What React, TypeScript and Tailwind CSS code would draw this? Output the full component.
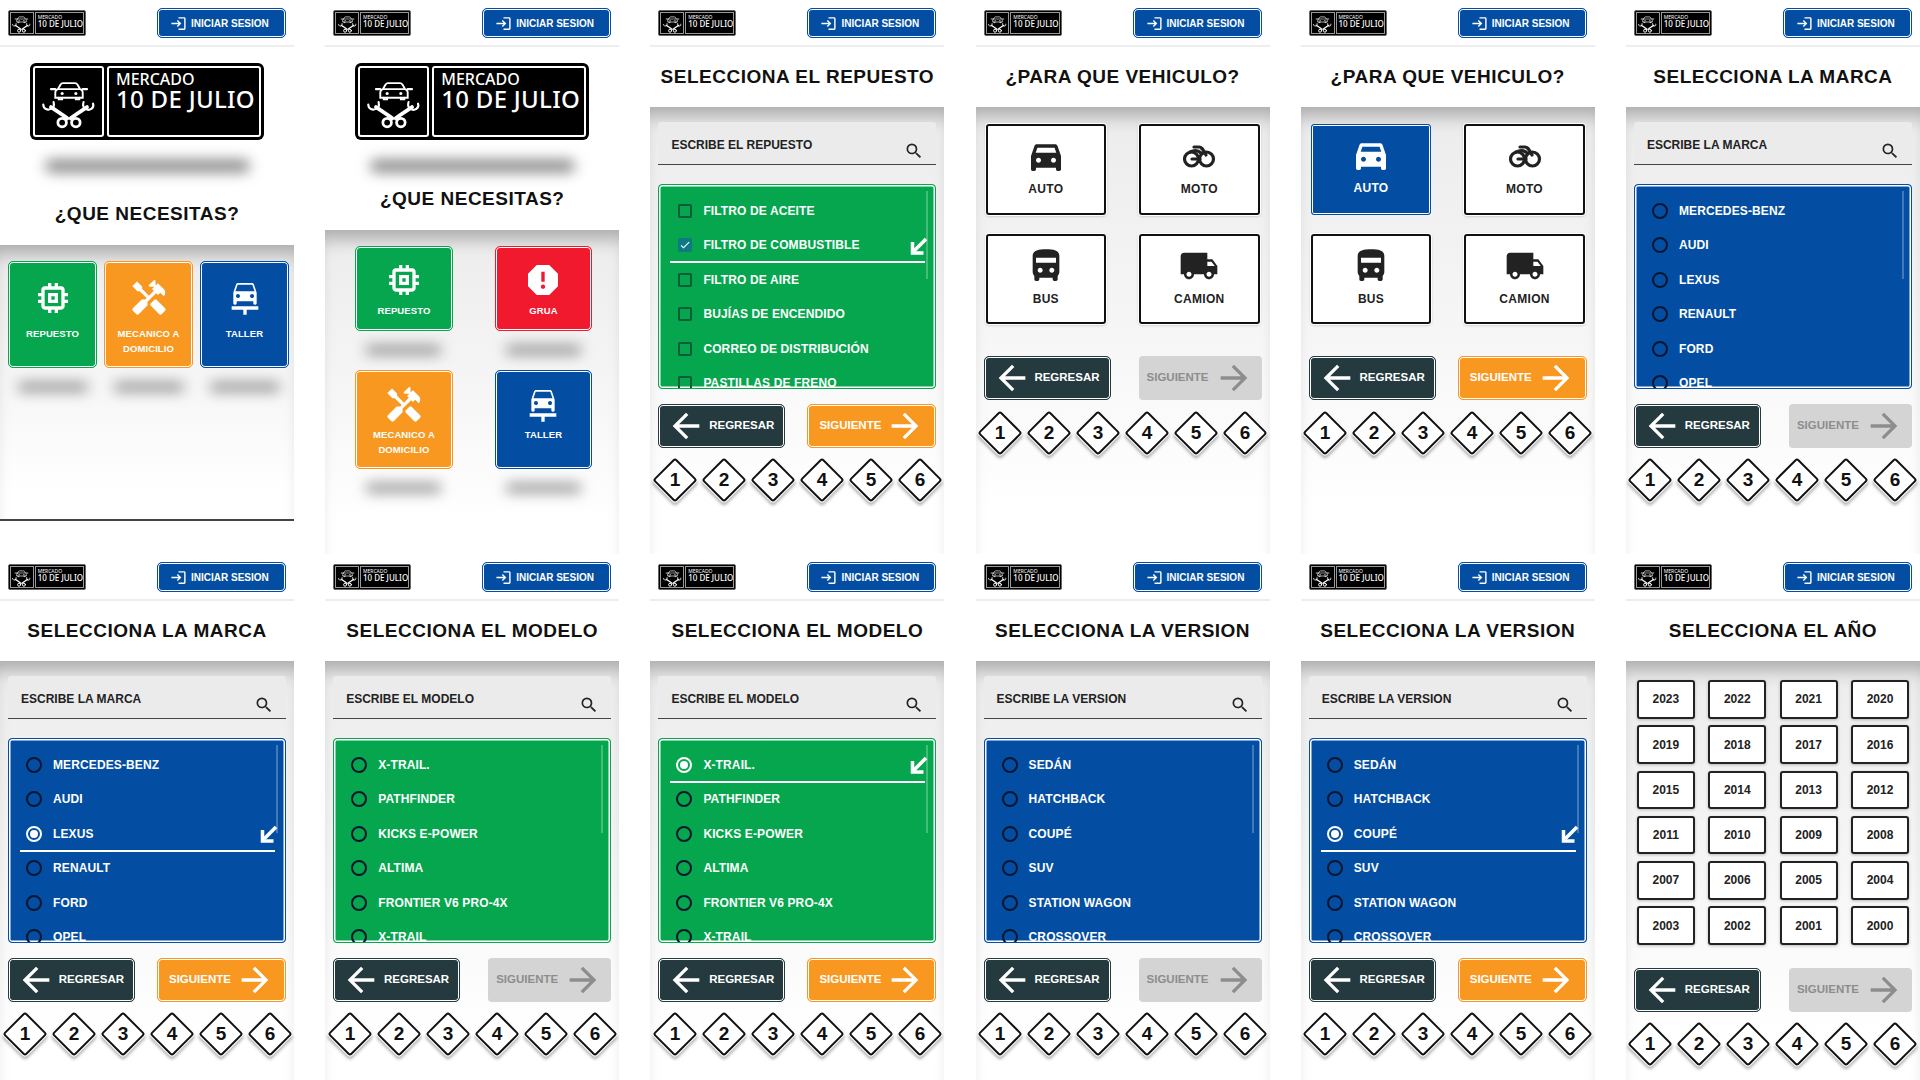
import {
  MdArrowBack,
  MdArrowForward,
  MdCarRepair,
  MdCheck,
  MdDirectionsBusFilled,
  MdDirectionsCarFilled,
  MdHandyman,
  MdLocalShipping,
  MdLogin,
  MdMemory,
  MdReport,
  MdSearch,
} from 'react-icons/md';

const marcas = ['MERCEDES-BENZ', 'AUDI', 'LEXUS', 'RENAULT', 'FORD', 'OPEL'];
const modelos = ['X-TRAIL.', 'PATHFINDER', 'KICKS E-POWER', 'ALTIMA', 'FRONTIER V6 PRO-4X', 'X-TRAIL'];
const versiones = ['SEDÁN', 'HATCHBACK', 'COUPÉ', 'SUV', 'STATION WAGON', 'CROSSOVER'];
const repuestos = [
  'FILTRO DE ACEITE',
  'FILTRO DE COMBUSTIBLE',
  'FILTRO DE AIRE',
  'BUJÍAS DE ENCENDIDO',
  'CORREO DE DISTRIBUCIÓN',
  'PASTILLAS DE FRENO',
];
const years = Array.from({ length: 24 }, (_, i) => 2023 - i);

const LogoMark = ({ className }: { className: string }) => (
  <svg viewBox="0 0 70 70" className={className} fill="none" stroke="white" strokeLinecap="round">
    <path d="M22 20l3-5c.6-1.200 1.500-2 3-2h14c1.500 0 2.400.8 3 2l3 5c2 .8 3 2 3 4v6H19v-6c0-2 1-3.200 3-4z" strokeWidth="2.200" />
    <path d="M23 20h24" strokeWidth="1.800" />
    <path d="M23 30v2h4v-2M47 30v2h-4v-2" strokeWidth="2.200" />
    <path d="M14 20h5M51 20h5" strokeWidth="2.500" />
    <circle cx="27" cy="25" r="1.800" fill="white" stroke="none" />
    <circle cx="43" cy="25" r="1.800" fill="white" stroke="none" />
    <path d="M14 41l15 10 4 3M56 41L41 51l-4 3" strokeWidth="4.500" />
    <path d="M5 38c0 5 5 7 9 5 3-1 4-4 3-8M63 37c2 5-4 9-9 6-3-2-3-5-2-8" strokeWidth="2.500" />
    <circle cx="27" cy="59" r="5" strokeWidth="3.200" />
    <circle cx="43" cy="59" r="5" strokeWidth="3.200" />
  </svg>
);

const Logo = ({ small }: { small?: boolean }) =>
  small ? (
    <div className="flex h-[26px] w-[78px] gap-[1px] rounded-[2px] border border-[#666] bg-black p-[1px] font-['Noto_Sans',sans-serif]">
      <div className="flex w-[24px] items-center justify-center border border-[#999]">
        <LogoMark className="h-[21px] w-[21px]" />
      </div>
      <div className="flex-1 whitespace-nowrap border border-[#999] pl-[2px] pt-[1px] text-white">
        <div className="text-[5px] leading-[6px]">MERCADO</div>
        <div className="text-[8px] font-medium leading-[8px]">10 DE JULIO</div>
      </div>
    </div>
  ) : (
    <div className="mx-auto flex h-[77px] w-[234px] gap-[3px] rounded-[6px] bg-black p-[3px] font-['Noto_Sans',sans-serif]">
      <div className="flex w-[71px] items-center justify-center rounded-[3px] border-2 border-white">
        <LogoMark className="h-[60px] w-[60px]" />
      </div>
      <div className="flex-1 whitespace-nowrap rounded-[3px] border-2 border-white pl-[7px] pt-[3px] text-white">
        <div className="text-[16px] font-medium leading-[17px]">MERCADO</div>
        <div className="text-[24px] font-medium leading-[22px] tracking-[0.3px]">10 DE JULIO</div>
      </div>
    </div>
  );

const Header = () => (
  <div className="flex h-[47px] shrink-0 items-center justify-between border-b-2 border-[#eeeeee] pl-[8px] pr-[8px] pt-[1px]">
    <Logo small />
    <div className="flex h-[30px] w-[129px] items-center gap-[4px] rounded-[5px] border border-[#034ea2] bg-[#034ea2] pl-[12px] text-[10px] font-bold text-white shadow-[inset_0_0_0_1px_white]">
      <MdLogin size={17} />
      INICIAR SESION
    </div>
  </div>
);

const Title = ({ text }: { text: string }) => (
  <div className="flex h-[60px] shrink-0 items-center justify-center text-[19px] font-bold tracking-[0.5px] text-[#111]">
    {text}
  </div>
);

const BlurShadow = ({ className }: { className: string }) => (
  <div className={`rounded-full bg-[#808080] blur-[7px] ${className}`} />
);

const panelClass =
  'flex flex-col bg-gradient-to-b from-[#ececec] via-[#f6f6f6] via-50% to-white to-90% shadow-[inset_0_18px_18px_-9px_rgba(0,0,0,0.28)]';

type ServiceProps = {
  label: string[];
  icon: React.ComponentType<{ size?: number }>;
  color: string;
  className: string;
};

const ServiceCard = ({ label, icon: Icon, color, className }: ServiceProps) => (
  <div
    className={`flex flex-col items-center rounded-[5px] border text-[9.500px] font-bold leading-[14.500px] tracking-[0.1px] text-white shadow-[inset_0_0_0_1px_white] ${color} ${className}`}
  >
    <Icon size={40} />
    {label.map((l) => (
      <div key={l}>{l}</div>
    ))}
  </div>
);

const green = 'border-[#06a64e] bg-[#06a64e]';
const orange = 'border-[#f99820] bg-[#f99820]';
const blue = 'border-[#034ea2] bg-[#034ea2]';
const red = 'border-[#f1192d] bg-[#f1192d]';

const HomeThree = () => (
  <>
    <div className="mt-[16px]">
      <Logo />
    </div>
    <BlurShadow className="mx-auto mt-[20px] h-[12px] w-[205px]" />
    <div className="mt-[22px] flex h-[40px] items-center justify-center text-[19px] font-bold tracking-[0.5px] text-[#111]">
      ¿QUE NECESITAS?
    </div>
    <div className={`${panelClass} mt-[11px] h-[276px] border-b-2 border-[#444]`}>
      <div className="mt-[16px] grid grid-cols-3 gap-x-[7px] pl-[8px] pr-[5px]">
        {[
          { label: ['REPUESTO'], icon: MdMemory, color: green },
          { label: ['MECANICO A', 'DOMICILIO'], icon: MdHandyman, color: orange },
          { label: ['TALLER'], icon: MdCarRepair, color: blue },
        ].map((c) => (
          <div key={c.label[0]}>
            <ServiceCard {...c} className="h-[107px] pt-[16px] [&>svg]:mb-[9px]" />
            <BlurShadow className="mx-auto mt-[15px] h-[8px] w-[70px]" />
          </div>
        ))}
      </div>
    </div>
  </>
);

const HomeFour = () => (
  <>
    <div className="mt-[16px]">
      <Logo />
    </div>
    <BlurShadow className="mx-auto mt-[20px] h-[12px] w-[205px]" />
    <div className="mt-[7px] flex h-[40px] items-center justify-center text-[19px] font-bold tracking-[0.5px] text-[#111]">
      ¿QUE NECESITAS?
    </div>
    <div className={`${panelClass} mt-[11px] flex-1`}>
      <div className="mt-[16px] grid grid-cols-2 gap-x-[42px] pl-[30px] pr-[27px]">
        {[
          { label: ['REPUESTO'], icon: MdMemory, color: green, h: 'h-[85px] pt-[13px] [&>svg]:mb-[4px]' },
          { label: ['GRUA'], icon: MdReport, color: red, h: 'h-[85px] pt-[13px] [&>svg]:mb-[4px]' },
          { label: ['MECANICO A', 'DOMICILIO'], icon: MdHandyman, color: orange, h: 'h-[99px] pt-[14px] [&>svg]:mb-[3px]' },
          { label: ['TALLER'], icon: MdCarRepair, color: blue, h: 'h-[99px] pt-[14px] [&>svg]:mb-[3px]' },
        ].map((c) => (
          <div key={c.label[0]} className="h-[124px]">
            <ServiceCard label={c.label} icon={c.icon} color={c.color} className={c.h} />
            <BlurShadow className="mx-auto mt-[15px] h-[8px] w-[75px]" />
          </div>
        ))}
      </div>
    </div>
  </>
);

const Diamonds = () => (
  <div className="mt-[10px] flex h-[44px] w-full">
    {[1, 2, 3, 4, 5, 6].map((n) => (
      <div key={n} className="flex flex-1 items-center justify-center">
        <div className="flex h-[32px] w-[32px] rotate-45 items-center justify-center rounded-[3px] border-2 border-[#111] bg-white shadow-[0_0_0_1px_white,2px_2px_3px_1px_rgba(0,0,0,0.28)]">
          <span className="-rotate-45 text-[19px] font-bold text-[#111]">{n}</span>
        </div>
      </div>
    ))}
  </div>
);

const Nav = ({ enabled }: { enabled: boolean }) => (
  <div className="flex h-[44px] justify-between pl-[8px] pr-[8px]">
    <div className="flex w-[127px] items-center justify-between rounded-[5px] border border-[#243a3e] bg-[#243a3e] pl-[7px] pr-[10px] text-[11.500px] font-bold text-white shadow-[inset_0_0_0_1px_white]">
      <MdArrowBack size={40} />
      REGRESAR
    </div>
    {enabled ? (
      <div className="flex w-[129px] items-center gap-[4px] rounded-[5px] border border-[#f99820] bg-[#f99820] pl-[11px] text-[11.500px] font-bold text-white shadow-[inset_0_0_0_1px_white]">
        SIGUIENTE
        <MdArrowForward size={40} />
      </div>
    ) : (
      <div className="flex w-[123px] items-center gap-[5px] rounded-[4px] bg-[#d4d4d4] pl-[8px] text-[11.500px] font-bold text-[#8d8d8d]">
        SIGUIENTE
        <MdArrowForward size={40} />
      </div>
    )}
  </div>
);

type ListProps = {
  placeholder: string;
  items: string[];
  color: 'green' | 'blue';
  selected?: number;
  checkbox?: boolean;
};

const SelectedArrow = () => (
  <svg viewBox="0 0 18 18" className="absolute right-[-3px] top-[8px] h-[18px] w-[18px]" fill="none" stroke="white" strokeWidth="3.500">
    <path d="M16 2L4 14" />
    <path d="M2.500 5v11h11" />
  </svg>
);

const ListStep = ({ placeholder, items, color, selected, checkbox }: ListProps) => (
  <div className={`${panelClass} flex-1`}>
    <div className="ml-[8px] mr-[8px] mt-[15px] flex h-[43px] justify-between rounded-t-[3px] border-b border-[#444] bg-[#ebebeb] pl-[13px] pr-[13px]">
      <span className="pt-[16px] text-[12px] font-bold leading-[15px] text-[#222]">{placeholder}</span>
      <MdSearch size={20} className="mr-[-1px] mt-[19px] text-[#222]" />
    </div>
    <div
      className={`relative ml-[8px] mr-[8px] mt-[19px] h-[205px] overflow-hidden rounded-[4px] border pt-[9px] shadow-[inset_0_0_0_1.500px_white] ${
        color === 'green' ? 'border-[#06a64e] bg-[#06a64e]' : 'border-[#034ea2] bg-[#034ea2]'
      }`}
    >
      <div className="absolute right-[7px] top-[6px] h-[88px] w-[2px] bg-white/25" />
      {items.map((item, i) => (
        <div
          key={item}
          className={`relative ml-[11px] mr-[10px] flex h-[34.500px] items-center pt-[1px] text-[12px] font-bold tracking-[0.12px] text-white ${
            checkbox ? 'pl-[8px]' : 'pl-[6px]'
          } ${i === selected ? 'border-b-2 border-white' : 'border-b-2 border-transparent'}`}
        >
          {checkbox ? (
            i === selected ? (
              <span className="mr-[11px] flex h-[14px] w-[14px] items-center justify-center rounded-[2px] bg-[#0e7a84]">
                <MdCheck size={12} />
              </span>
            ) : (
              <span className="mr-[11px] h-[14px] w-[14px] rounded-[2px] border-2 border-[#0a5c38]" />
            )
          ) : i === selected ? (
            <span className="mr-[11px] flex h-[16px] w-[16px] items-center justify-center rounded-full border-2 border-white">
              <span className="h-[8px] w-[8px] rounded-full bg-white" />
            </span>
          ) : (
            <span className="mr-[11px] h-[16px] w-[16px] rounded-full border-2 border-[#06162e]" />
          )}
          {item}
          {i === selected && <SelectedArrow />}
        </div>
      ))}
    </div>
    <div className="mt-[15px]">
      <Nav enabled={selected !== undefined} />
    </div>
    <Diamonds />
  </div>
);

const MotoIcon = ({ size }: { size?: number }) => (
  <svg width={size} height={size} viewBox="0 0 40 40" fill="none" stroke="currentColor" strokeWidth="3.200" strokeLinecap="round">
    <circle cx="12.500" cy="23" r="7" />
    <circle cx="27.500" cy="23" r="7" />
    <path d="M13 23h8M15 11h5c3 0 4 3 7 8M11 16c4-2 8-2 11 1" />
  </svg>
);

const VehicleStep = ({ selected }: { selected?: boolean }) => (
  <div className={`${panelClass} flex-1`}>
    <div className="mt-[17px] grid grid-cols-2 gap-x-[33px] gap-y-[19px] pl-[10px] pr-[10px]">
      {[
        { label: 'AUTO', icon: MdDirectionsCarFilled },
        { label: 'MOTO', icon: MotoIcon },
        { label: 'BUS', icon: MdDirectionsBusFilled },
        { label: 'CAMION', icon: MdLocalShipping },
      ].map(({ label, icon: Icon }) => {
        const on = selected && label === 'AUTO';
        return (
          <div
            key={label}
            className={`flex h-[90.500px] flex-col items-center rounded-[3px] pt-[10px] text-[12px] font-bold tracking-[0.3px] ${
              on
                ? 'border border-[#034ea2] bg-[#034ea2] text-white shadow-[inset_0_0_0_1px_white]'
                : 'border-2 border-[#111] bg-white text-[#222] shadow-[0_0_0_1px_white,0_1px_3px_rgba(0,0,0,0.3)]'
            }`}
          >
            <Icon size={40} />
            <span className="mt-[4px]">{label}</span>
          </div>
        );
      })}
    </div>
    <div className="mt-[32px]">
      <Nav enabled={!!selected} />
    </div>
    <div className="pt-[1px]">
      <Diamonds />
    </div>
  </div>
);

const YearStep = () => (
  <div className={`${panelClass} flex-1`}>
    <div className="mt-[19px] grid grid-cols-4 gap-x-[13.500px] gap-y-[6.800px] pl-[11px] pr-[11px]">
      {years.map((y) => (
        <div
          key={y}
          className="flex h-[38.500px] items-center justify-center rounded-[3px] border-2 border-[#222] bg-white text-[12px] font-bold text-[#222] shadow-[0_1px_3px_rgba(0,0,0,0.25)]"
        >
          {y}
        </div>
      ))}
    </div>
    <div className="mt-[23px]">
      <Nav enabled={false} />
    </div>
    <Diamonds />
  </div>
);

const Screen = ({ title, children }: { title?: string; children: React.ReactNode }) => (
  <div className="flex w-[294px] flex-col">
    <Header />
    {title && <Title text={title} />}
    {children}
  </div>
);

export default function App() {
  return (
    <div className="flex h-[1080px] w-[1920px] flex-col overflow-hidden bg-white font-['Liberation_Sans',sans-serif]">
      <div className="flex h-[554px] justify-between">
        <Screen>
          <HomeThree />
        </Screen>
        <Screen>
          <HomeFour />
        </Screen>
        <Screen title="SELECCIONA EL REPUESTO">
          <ListStep placeholder="ESCRIBE EL REPUESTO" items={repuestos} color="green" selected={1} checkbox />
        </Screen>
        <Screen title="¿PARA QUE VEHICULO?">
          <VehicleStep />
        </Screen>
        <Screen title="¿PARA QUE VEHICULO?">
          <VehicleStep selected />
        </Screen>
        <Screen title="SELECCIONA LA MARCA">
          <ListStep placeholder="ESCRIBE LA MARCA" items={marcas} color="blue" />
        </Screen>
      </div>
      <div className="flex h-[526px] justify-between">
        <Screen title="SELECCIONA LA MARCA">
          <ListStep placeholder="ESCRIBE LA MARCA" items={marcas} color="blue" selected={2} />
        </Screen>
        <Screen title="SELECCIONA EL MODELO">
          <ListStep placeholder="ESCRIBE EL MODELO" items={modelos} color="green" />
        </Screen>
        <Screen title="SELECCIONA EL MODELO">
          <ListStep placeholder="ESCRIBE EL MODELO" items={modelos} color="green" selected={0} />
        </Screen>
        <Screen title="SELECCIONA LA VERSION">
          <ListStep placeholder="ESCRIBE LA VERSION" items={versiones} color="blue" />
        </Screen>
        <Screen title="SELECCIONA LA VERSION">
          <ListStep placeholder="ESCRIBE LA VERSION" items={versiones} color="blue" selected={2} />
        </Screen>
        <Screen title="SELECCIONA EL AÑO">
          <YearStep />
        </Screen>
      </div>
    </div>
  );
}
